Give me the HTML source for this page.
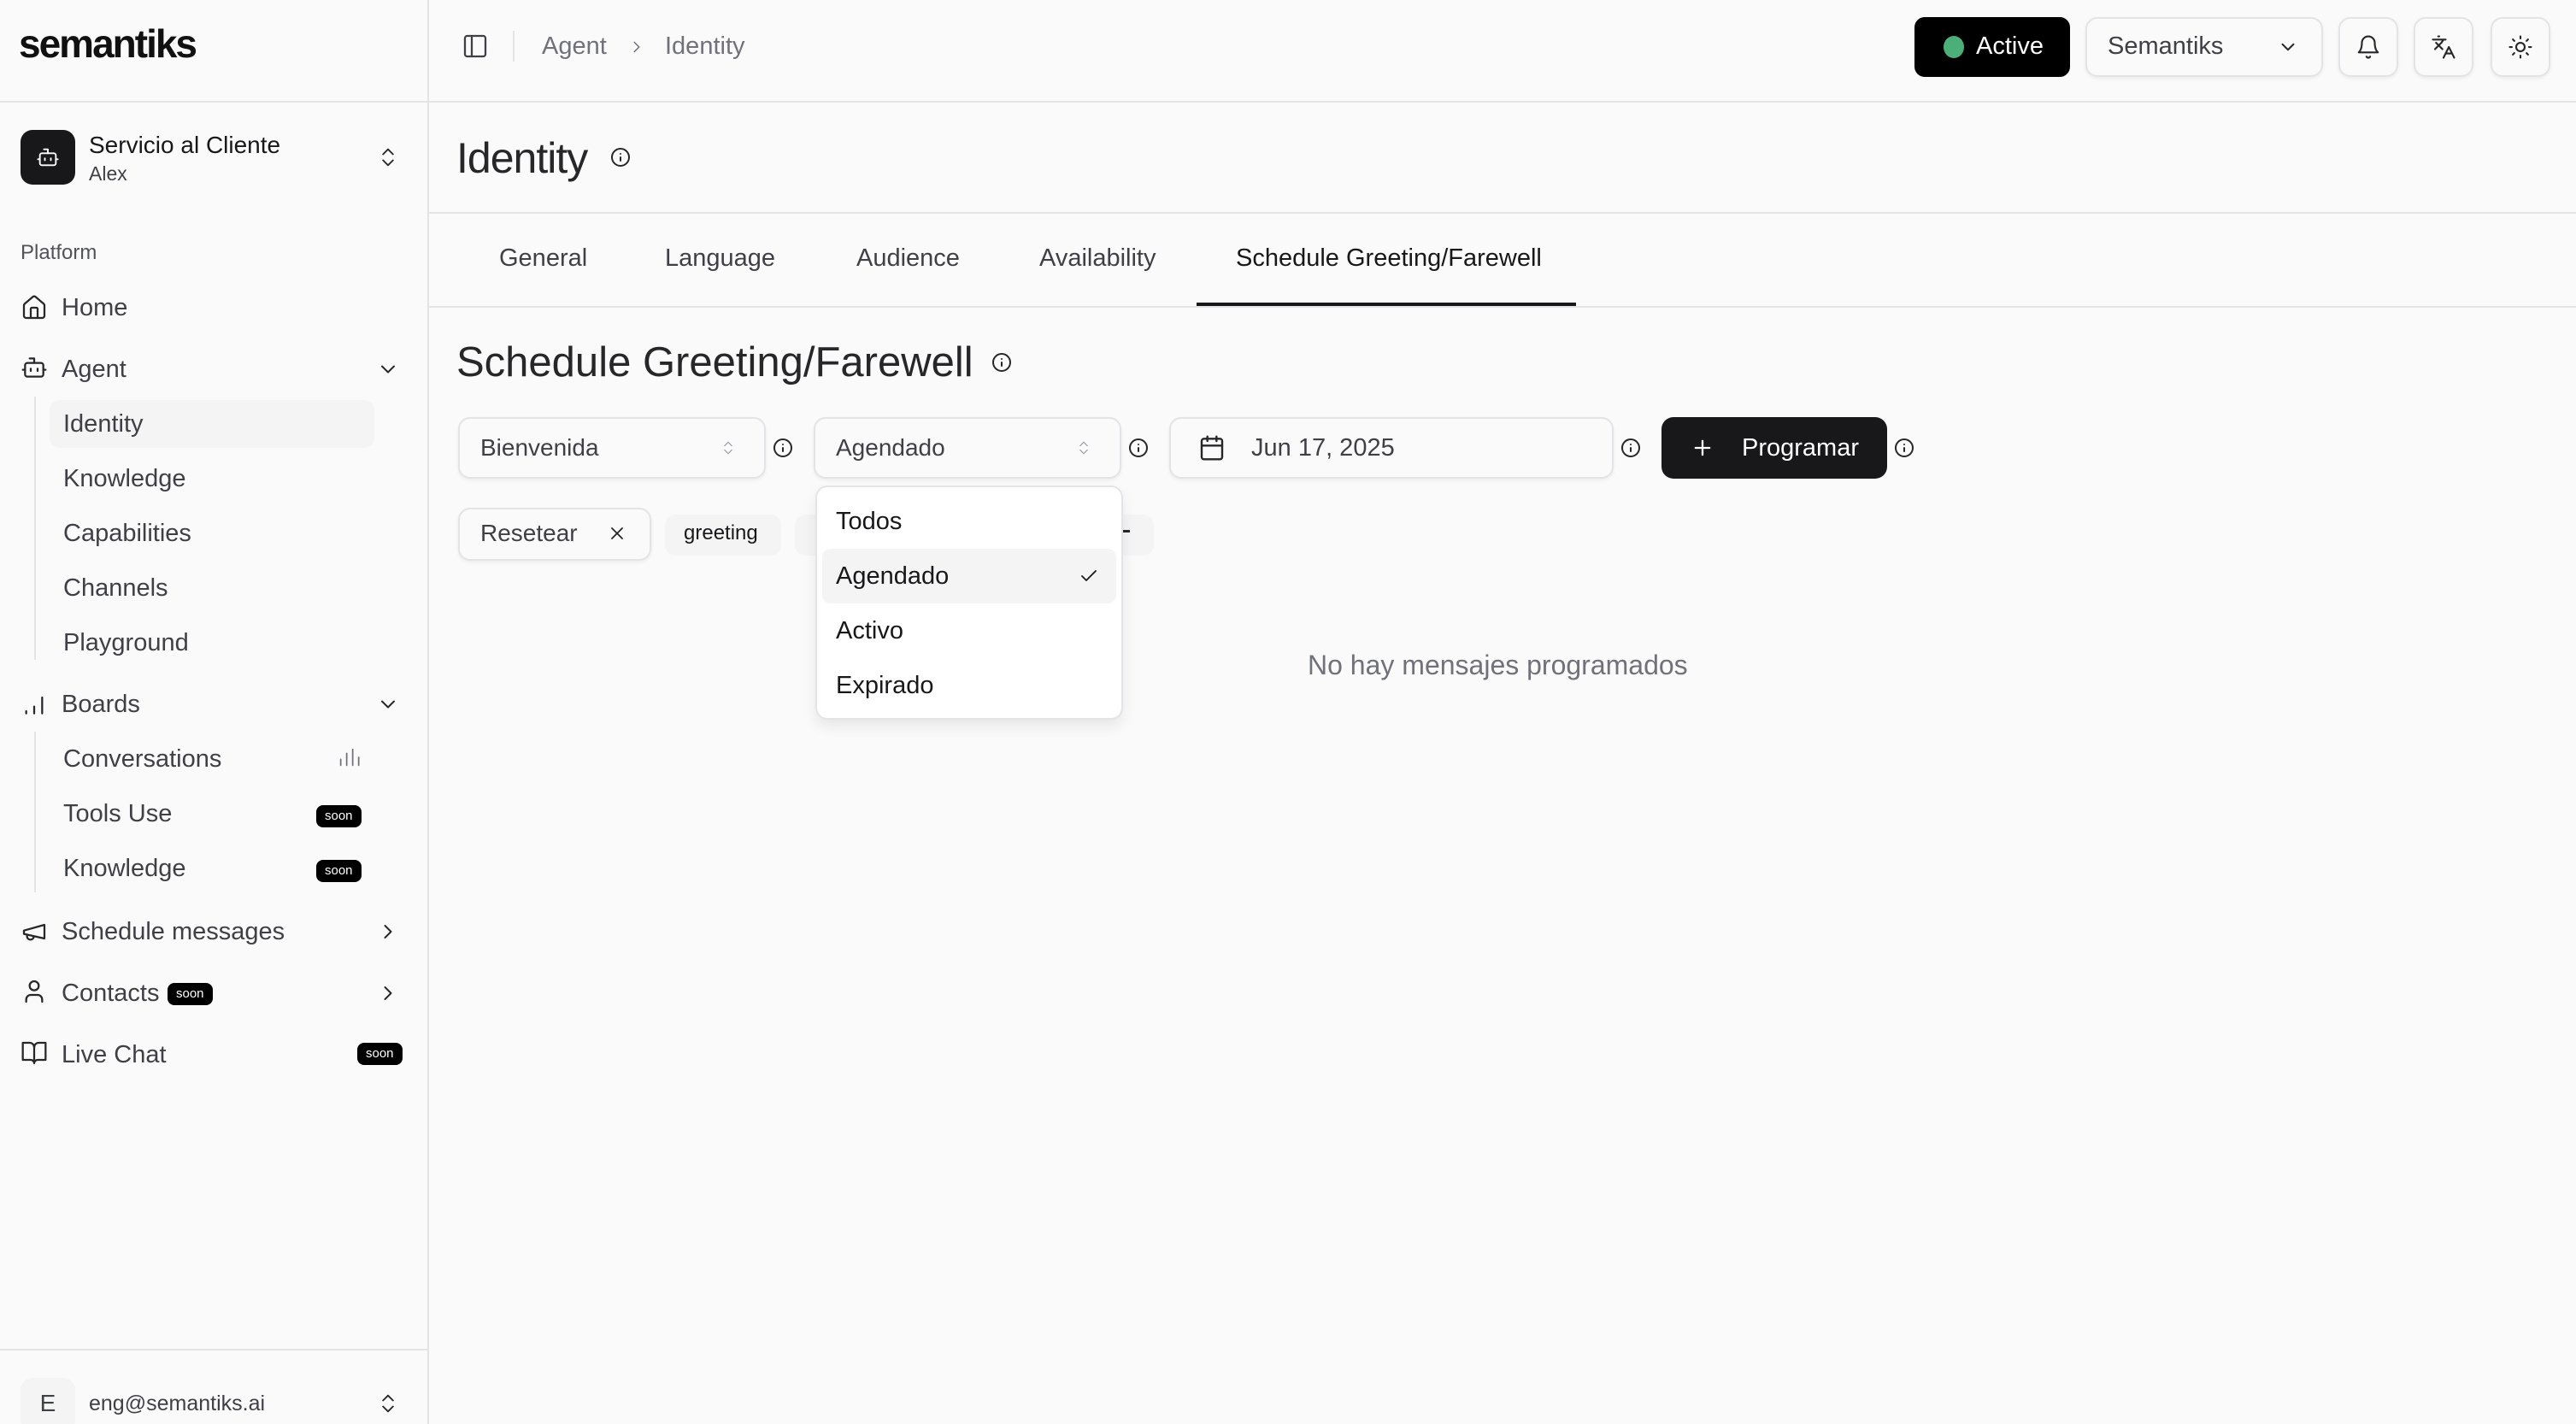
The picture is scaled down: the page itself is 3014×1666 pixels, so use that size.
<!DOCTYPE html>
<html><head><meta charset="utf-8">
<style>
*{box-sizing:border-box;margin:0;padding:0}
html,body{width:3014px;height:1666px;overflow:hidden;background:#fafafa}
#r{zoom:2;position:relative;width:1507px;height:833px;font-family:"Liberation Sans",sans-serif;color:#27272a;font-size:14px}
.a{position:absolute;white-space:nowrap}
svg{position:absolute;fill:none;stroke:currentColor;stroke-width:2;stroke-linecap:round;stroke-linejoin:round}
.side{left:0;top:0;width:251px;height:833px;border-right:1px solid #e4e4e7}
.hl{border-top:1px solid #e4e4e7}
.nav{font-size:14.5px;color:#3f3f46;margin-top:1px}
.soon{background:#000;color:#fff;font-size:7.5px;border-radius:4px;padding:2px 5px;line-height:9px}
.box{border:1px solid #e4e4e7;border-radius:7px;background:#fafafa;box-shadow:0 1px 2px rgba(0,0,0,.06)}
.tab{font-size:14.5px;color:#3f3f46;top:143px}
.info{width:12px;height:12px}
</style></head><body><div id="r">
<!-- sidebar -->
<div class="a side"></div>
<div class="a" style="left:11px;top:12px;font-size:23px;font-weight:bold;letter-spacing:-1px;color:#111">semantiks</div>
<div class="a hl" style="left:0;top:59px;width:251px"></div>
<div class="a" style="left:12px;top:76px;width:32px;height:32px;border-radius:7px;background:#18181b"></div>
<svg style="left:21px;top:85px;color:#fff;stroke-width:1.6" width="14" height="14" viewBox="0 0 24 24"><rect x="4" y="8" width="16" height="12" rx="2"/><path d="M12 8V4H8M2 14h2M20 14h2M15 13v2M9 13v2"/></svg>
<div class="a" style="left:52px;top:77px;font-size:14px;color:#18181b">Servicio al Cliente</div>
<div class="a" style="left:52px;top:95px;font-size:11.5px;color:#3f3f46">Alex</div>
<svg style="left:220px;top:84px;stroke-width:1.6" width="14" height="16" viewBox="0 0 24 24"><path d="M7 9l5-5 5 5M7 15l5 5 5-5"/></svg>
<div class="a" style="left:12px;top:141px;font-size:12px;color:#52525b">Platform</div>
<svg style="left:12px;top:172px;stroke-width:1.7" width="16" height="16" viewBox="0 0 24 24"><path d="M15 21v-8a1 1 0 0 0-1-1h-4a1 1 0 0 0-1 1v8"/><path d="M3 10a2 2 0 0 1 .7-1.5l7-6a2 2 0 0 1 2.6 0l7 6a2 2 0 0 1 .7 1.5v9a2 2 0 0 1-2 2H5a2 2 0 0 1-2-2z"/></svg>
<div class="a nav" style="left:36px;top:171px">Home</div>
<svg style="left:12px;top:207px;stroke-width:1.7" width="16" height="16" viewBox="0 0 24 24"><path d="M12 8V4H8"/><rect x="4" y="8" width="16" height="12" rx="2"/><path d="M2 14h2M20 14h2M15 13v2M9 13v2"/></svg>
<div class="a nav" style="left:36px;top:207px">Agent</div>
<svg style="left:220px;top:209px;stroke-width:1.7" width="14" height="14" viewBox="0 0 24 24"><path d="M6 9l6 6 6-6"/></svg>
<div class="a" style="left:20px;top:232px;width:1px;height:154px;background:#e4e4e7"></div>
<div class="a" style="left:29px;top:234px;width:190px;height:28px;border-radius:6px;background:#f4f4f5"></div>
<div class="a nav" style="left:37px;top:239px">Identity</div>
<div class="a nav" style="left:37px;top:271px">Knowledge</div>
<div class="a nav" style="left:37px;top:303px">Capabilities</div>
<div class="a nav" style="left:37px;top:335px">Channels</div>
<div class="a nav" style="left:37px;top:367px">Playground</div>
<svg style="left:12px;top:404px;stroke-width:1.7" width="16" height="16" viewBox="0 0 24 24"><path d="M5 20v-2M12 20v-6M19 20V6"/></svg>
<div class="a nav" style="left:36px;top:403px">Boards</div>
<svg style="left:220px;top:405px;stroke-width:1.7" width="14" height="14" viewBox="0 0 24 24"><path d="M6 9l6 6 6-6"/></svg>
<div class="a" style="left:20px;top:428px;width:1px;height:94px;background:#e4e4e7"></div>
<div class="a nav" style="left:37px;top:435px">Conversations</div>
<svg style="left:197px;top:436px;stroke-width:1.5;color:#71717a" width="14" height="14" viewBox="0 0 24 24"><path d="M4 20v-6M10 20V8M16 20V4M22 20v-8"/></svg>
<div class="a nav" style="left:37px;top:467px">Tools Use</div>
<div class="a soon" style="left:185px;top:471px">soon</div>
<div class="a nav" style="left:37px;top:499px">Knowledge</div>
<div class="a soon" style="left:185px;top:503px">soon</div>
<svg style="left:12px;top:537px;stroke-width:1.7" width="16" height="16" viewBox="0 0 24 24"><path d="M3 11l18-5v12L3 14v-3z"/><path d="M11.6 16.8a3 3 0 1 1-5.8-1.6"/></svg>
<div class="a nav" style="left:36px;top:536px">Schedule messages</div>
<svg style="left:220px;top:538px;stroke-width:1.7" width="14" height="14" viewBox="0 0 24 24"><path d="M9 18l6-6-6-6"/></svg>
<svg style="left:12px;top:572px;stroke-width:1.7" width="16" height="16" viewBox="0 0 24 24"><circle cx="12" cy="7" r="4"/><path d="M19 21v-2a4 4 0 0 0-4-4H9a4 4 0 0 0-4 4v2"/></svg>
<div class="a nav" style="left:36px;top:572px">Contacts</div>
<div class="a soon" style="left:98px;top:575px">soon</div>
<svg style="left:220px;top:574px;stroke-width:1.7" width="14" height="14" viewBox="0 0 24 24"><path d="M9 18l6-6-6-6"/></svg>
<svg style="left:12px;top:608px;stroke-width:1.7" width="16" height="16" viewBox="0 0 24 24"><path d="M2 3h6a4 4 0 0 1 4 4v14a3 3 0 0 0-3-3H2zM22 3h-6a4 4 0 0 0-4 4v14a3 3 0 0 1 3-3h7z"/></svg>
<div class="a nav" style="left:36px;top:608px">Live Chat</div>
<div class="a soon" style="left:209px;top:610px">soon</div>
<div class="a hl" style="left:0;top:789px;width:251px"></div>
<div class="a" style="left:12px;top:806px;width:32px;height:32px;border-radius:7px;background:#f4f4f5;text-align:center;line-height:30px;font-size:14px;color:#3f3f46">E</div>
<div class="a" style="left:52px;top:814px;font-size:12.5px;color:#3f3f46">eng@semantiks.ai</div>
<svg style="left:220px;top:813px;stroke-width:1.6" width="14" height="16" viewBox="0 0 24 24"><path d="M7 9l5-5 5 5M7 15l5 5 5-5"/></svg>

<!-- header -->
<div class="a hl" style="left:251px;top:59px;width:1256px"></div>
<svg style="left:270px;top:19px;stroke-width:1.7;color:#3f3f46" width="16" height="16" viewBox="0 0 24 24"><rect x="3" y="3" width="18" height="18" rx="2"/><path d="M9 3v18"/></svg>
<div class="a" style="left:300px;top:18px;width:1px;height:18px;background:#e4e4e7"></div>
<div class="a" style="left:317px;top:19px;font-size:14.5px;color:#71717a">Agent</div>
<svg style="left:367px;top:22px;stroke-width:1.7;color:#71717a" width="11" height="11" viewBox="0 0 24 24"><path d="M9 18l6-6-6-6"/></svg>
<div class="a" style="left:389px;top:19px;font-size:14.5px;color:#71717a">Identity</div>
<div class="a" style="left:1120px;top:10px;width:91px;height:35px;border-radius:6px;background:#000"></div>
<div class="a" style="left:1137px;top:21px;width:12px;height:13px;border-radius:50%;background:#4caf7a"></div>
<div class="a" style="left:1156px;top:19px;font-size:14.5px;color:#fff">Active</div>
<div class="a box" style="left:1220px;top:10px;width:139px;height:35px"></div>
<div class="a" style="left:1233px;top:19px;font-size:14.5px;color:#3f3f46">Semantiks</div>
<svg style="left:1332px;top:21px;stroke-width:1.8" width="13" height="13" viewBox="0 0 24 24"><path d="M6 9l6 6 6-6"/></svg>
<div class="a box" style="left:1368px;top:10px;width:35px;height:35px"></div>
<svg style="left:1378px;top:20px;stroke-width:1.7" width="15" height="15" viewBox="0 0 24 24"><path d="M6 8a6 6 0 0 1 12 0c0 7 3 9 3 9H3s3-2 3-9M10.3 21a1.9 1.9 0 0 0 3.4 0"/></svg>
<div class="a box" style="left:1412px;top:10px;width:35px;height:35px"></div>
<svg style="left:1422px;top:20px;stroke-width:1.7" width="15" height="15" viewBox="0 0 24 24"><path d="M5 8l6 6M4 14l6-6 2-3M2 5h12M7 2h1M22 22l-5-10-5 10M14 18h6"/></svg>
<div class="a box" style="left:1457px;top:10px;width:35px;height:35px"></div>
<svg style="left:1467px;top:20px;stroke-width:1.7" width="15" height="15" viewBox="0 0 24 24"><circle cx="12" cy="12" r="4"/><path d="M12 2v2M12 20v2M4.9 4.9l1.4 1.4M17.7 17.7l1.4 1.4M2 12h2M20 12h2M6.3 17.7l-1.4 1.4M19.1 4.9l-1.4 1.4"/></svg>

<!-- title -->
<div class="a" style="left:267px;top:78px;font-size:25px;color:#27272a;letter-spacing:-.5px">Identity</div>
<svg class="info" style="left:357px;top:86px;stroke-width:2" width="12" height="12" viewBox="0 0 24 24"><circle cx="12" cy="12" r="10"/><path d="M12 16v-4M12 8h0"/></svg>
<div class="a hl" style="left:251px;top:124px;width:1256px"></div>
<div class="a tab" style="left:292px">General</div>
<div class="a tab" style="left:389px">Language</div>
<div class="a tab" style="left:501px">Audience</div>
<div class="a tab" style="left:608px">Availability</div>
<div class="a tab" style="left:723px;color:#18181b">Schedule Greeting/Farewell</div>
<div class="a hl" style="left:251px;top:179px;width:1256px"></div>
<div class="a" style="left:700px;top:177px;width:222px;height:2px;background:#18181b"></div>

<div class="a" style="left:267px;top:198px;font-size:24.5px;color:#27272a;letter-spacing:0">Schedule Greeting/Farewell</div>
<svg class="info" style="left:580px;top:206px" width="12" height="12" viewBox="0 0 24 24"><circle cx="12" cy="12" r="10"/><path d="M12 16v-4M12 8h0"/></svg>

<!-- controls -->
<div class="a box" style="left:268px;top:244px;width:180px;height:36px"></div>
<div class="a" style="left:281px;top:254px;font-size:14px;color:#3f3f46">Bienvenida</div>
<svg style="left:421px;top:256px;stroke-width:1.5;color:#a1a1aa" width="10" height="12" viewBox="0 0 24 24"><path d="M7 9l5-5 5 5M7 15l5 5 5-5"/></svg>
<svg class="info" style="left:452px;top:256px" width="12" height="12" viewBox="0 0 24 24"><circle cx="12" cy="12" r="10"/><path d="M12 16v-4M12 8h0"/></svg>
<div class="a box" style="left:476px;top:244px;width:180px;height:36px"></div>
<div class="a" style="left:489px;top:254px;font-size:14px;color:#3f3f46">Agendado</div>
<svg style="left:629px;top:256px;stroke-width:1.5;color:#a1a1aa" width="10" height="12" viewBox="0 0 24 24"><path d="M7 9l5-5 5 5M7 15l5 5 5-5"/></svg>
<svg class="info" style="left:660px;top:256px" width="12" height="12" viewBox="0 0 24 24"><circle cx="12" cy="12" r="10"/><path d="M12 16v-4M12 8h0"/></svg>
<div class="a box" style="left:684px;top:244px;width:260px;height:36px"></div>
<svg style="left:701px;top:254px;stroke-width:1.8" width="16" height="16" viewBox="0 0 24 24"><rect x="3" y="4" width="18" height="18" rx="2"/><path d="M16 2v4M8 2v4M3 10h18"/></svg>
<div class="a" style="left:732px;top:254px;font-size:14.5px;color:#3f3f46">Jun 17, 2025</div>
<svg class="info" style="left:948px;top:256px" width="12" height="12" viewBox="0 0 24 24"><circle cx="12" cy="12" r="10"/><path d="M12 16v-4M12 8h0"/></svg>
<div class="a" style="left:972px;top:244px;width:132px;height:36px;border-radius:7px;background:#18181b"></div>
<svg style="left:989px;top:255px;stroke-width:2;color:#fff" width="14" height="14" viewBox="0 0 24 24"><path d="M12 5v14M5 12h14"/></svg>
<div class="a" style="left:1019px;top:254px;font-size:14.5px;color:#fff">Programar</div>
<svg class="info" style="left:1108px;top:256px" width="12" height="12" viewBox="0 0 24 24"><circle cx="12" cy="12" r="10"/><path d="M12 16v-4M12 8h0"/></svg>

<div class="a box" style="left:268px;top:297px;width:113px;height:31px"></div>
<div class="a" style="left:281px;top:304px;font-size:14px;color:#3f3f46">Resetear</div>
<svg style="left:355px;top:306px;stroke-width:1.8" width="12" height="12" viewBox="0 0 24 24"><path d="M18 6L6 18M6 6l12 12"/></svg>
<div class="a" style="left:389px;top:301px;width:68px;height:24px;border-radius:6px;background:#f4f4f5"></div>
<div class="a" style="left:400px;top:305px;font-size:12px;color:#18181b">greeting</div>
<div class="a" style="left:465px;top:301px;width:210px;height:24px;border-radius:6px;background:#f4f4f5"></div>
<div class="a" style="left:657px;top:310px;width:4px;height:1.5px;background:#27272a"></div>

<div class="a" style="left:765px;top:380px;font-size:16px;color:#71717a">No hay mensajes programados</div>

<!-- dropdown -->
<div class="a" style="left:477px;top:284px;width:180px;height:137px;background:#fff;border:1px solid #e4e4e7;border-radius:7px;box-shadow:0 4px 8px rgba(0,0,0,.08)"></div>
<div class="a" style="left:481px;top:321px;width:172px;height:32px;border-radius:5px;background:#f4f4f5"></div>
<div class="a" style="left:489px;top:297px;font-size:14.5px;color:#18181b">Todos</div>
<div class="a" style="left:489px;top:329px;font-size:14.5px;color:#18181b">Agendado</div>
<svg style="left:631px;top:331px;stroke-width:1.8;color:#18181b" width="12" height="12" viewBox="0 0 24 24"><path d="M20 6L9 17l-5-5"/></svg>
<div class="a" style="left:489px;top:361px;font-size:14.5px;color:#18181b">Activo</div>
<div class="a" style="left:489px;top:393px;font-size:14.5px;color:#18181b">Expirado</div>
</div></body></html>
